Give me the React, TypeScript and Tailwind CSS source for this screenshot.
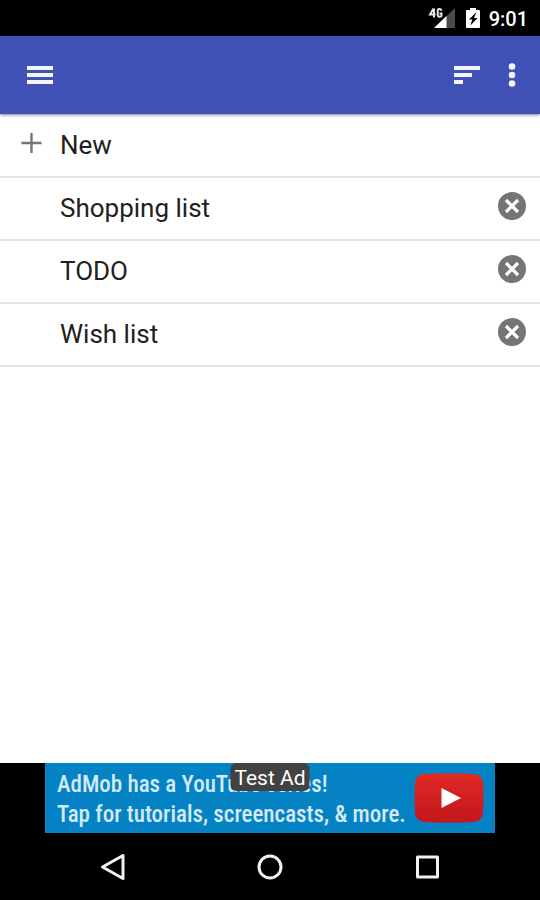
import React from 'react'

const lists = ["Shopping list", "TODO", "Wish list"]

const StatusBar = () => {
    return (
        <div className="flex h-9 items-center justify-end bg-black pr-3 text-white">
            <svg className="h-6 w-7" viewBox="0 0 28 24" aria-hidden="true">
                <path d="M28 2v20H7z" fill="#4a4a4a" />
                <path d="M19.500 10v12H7z" fill="#fff" />
                <path d="M6 2.500L2.500 8.500h5.500M7 2.500v9M14.500 4.500c-.8-2.200-4-2.200-4 .5v3.500c0 3 4 3 4 .5V7.500h-2" fill="none" stroke="#000" strokeWidth="4" />
                <path d="M6.500 2.500L3 8.500h5.500M7 2.500v9M14.500 4.800c-.6-2.400-3.800-2.300-3.800.3v3.400c0 3 3.800 2.800 3.800 1V7.500h-2" fill="none" stroke="#e8e8e8" strokeWidth="2" />
            </svg>
            <svg className="ml-2.5 h-6 w-4" viewBox="0 0 16 24" aria-hidden="true">
                <path d="M5 2h6v2h3q1 0 1 1v16q0 1-1 1H2q-1 0-1-1V5q0-1 1-1h3z" fill="#fff" />
                <path d="M11.500 6L4 13.500h3.200L5.500 19.500 12.500 12H9z" fill="#000" />
            </svg>
            <span className="ml-2 pt-0.5 text-[20px] font-medium leading-6">9:01</span>
        </div>
    )
}

const Toolbar = () => {
    return (
        <header className="relative flex h-[78px] items-center bg-[#3f51b5] pl-6 pr-4 shadow-[0px_1px_3px_0px_#00000080]">
            <button type="button" aria-label="Menu" className="flex h-8 w-8 items-center justify-center">
                <svg className="h-8 w-8" viewBox="0 0 32 32" fill="#f4f5fb">
                    <path d="M3 7h26v4H3zM3 14h26v4H3zM3 21h26v4H3z" />
                </svg>
            </button>
            <button type="button" aria-label="Sort" className="ml-auto flex h-8 w-8 items-center justify-center">
                <svg className="h-8 w-8" viewBox="0 0 32 32" fill="#f4f5fb">
                    <path d="M3 7h26v4H3zM3 14h18v4H3zM3 21h9v4H3z" />
                </svg>
            </button>
            <button type="button" aria-label="More options" className="ml-[17px] flex h-8 w-6 items-center justify-center">
                <svg className="h-8 w-6" viewBox="0 0 24 32" fill="#f4f5fb">
                    <circle cx="12" cy="7.500" r="3.300" />
                    <circle cx="12" cy="16" r="3.300" />
                    <circle cx="12" cy="24.500" r="3.300" />
                </svg>
            </button>
        </header>
    )
}

const TestAd = () => {
    return (
        <div className="relative bg-black px-[45px]">
            <a href="#ad" className="flex h-[70px] items-center bg-[#0582c4] pl-3 pr-[11px] text-[#d3eaf8]">
                <span className="whitespace-nowrap pt-1 font-['Roboto_Condensed','Roboto',sans-serif] text-[23px] font-medium leading-[30px]">
                    AdMob has a YouTube series!<br />
                    Tap for tutorials, screencasts, &amp; more.
                </span>
                <svg className="ml-auto h-[50px] w-[70px] shrink-0" viewBox="0 0 70 50" aria-hidden="true">
                    <defs>
                        <linearGradient id="play" x1="0" y1="0" x2="0" y2="1">
                            <stop offset="0" stopColor="#e02a24" />
                            <stop offset="1" stopColor="#c4161c" />
                        </linearGradient>
                    </defs>
                    <path d="M10 1Q35-.5 60 1q8 .5 9 9 1 15 0 30-1 8-9 9-25 1.500-50 0-8-1-9-9-1-15 0-30 1-8.500 9-9z" fill="url(#play)" />
                    <path d="M27.500 15v20L47 25z" fill="#fff" />
                </svg>
            </a>
            <span className="absolute left-1/2 top-0 -translate-x-1/2 whitespace-nowrap rounded-md bg-[#424242] px-1 pt-0.5 text-[21px] leading-[26px] text-white">Test Ad</span>
        </div>
    )
}

const NavBar = () => {
    return (
        <nav className="flex h-[67px] items-center justify-center gap-[125px] bg-black">
            <button type="button" aria-label="Back">
                <svg className="h-8 w-8" viewBox="0 0 32 32" fill="none" stroke="#f2f2f2" strokeWidth="3" strokeLinejoin="round">
                    <path d="M26 4.500v23L5.500 16z" />
                </svg>
            </button>
            <button type="button" aria-label="Home">
                <svg className="h-8 w-8" viewBox="0 0 32 32" fill="none" stroke="#f2f2f2" strokeWidth="3">
                    <circle cx="16" cy="16" r="11" />
                </svg>
            </button>
            <button type="button" aria-label="Recent apps">
                <svg className="h-8 w-8" viewBox="0 0 32 32" fill="none" stroke="#f2f2f2" strokeWidth="3" strokeLinejoin="round">
                    <path d="M6.500 6h20v20h-20z" />
                </svg>
            </button>
        </nav>
    )
}

const App = () => {
    return (
        <div className="flex min-h-screen flex-col bg-white font-['Roboto',sans-serif] text-[#212121]">
            <StatusBar />
            <Toolbar />
            <main className="flex-1">
                <button type="button" className="flex h-16 w-full items-center border-b-2 border-[#e4e4e4] pl-5 text-left text-[26px] leading-8">
                    <svg className="mb-1 mr-4 h-6 w-6" viewBox="0 0 24 24" fill="none" stroke="#757575" strokeWidth="2.400" aria-hidden="true">
                        <path d="M11.500 2v20M1.500 12h20" />
                    </svg>
                    New
                </button>
                <ul>
                    {lists.map((name) => (
                        <li key={name} className="flex h-[63px] items-center border-b-2 border-[#e4e4e4] pb-0.5 pl-[60px] pr-3">
                            <a href="#list" className="flex-1 text-[26px] leading-8">{name}</a>
                            <button type="button" aria-label={`Delete ${name}`} className="mb-1 h-8 w-8">
                                <svg className="h-8 w-8" viewBox="0 0 32 32">
                                    <circle cx="16" cy="16" r="14" fill="#757575" />
                                    <path d="M10 10l12 12M22 10l-12 12" stroke="#fff" strokeWidth="3.200" />
                                </svg>
                            </button>
                        </li>
                    ))}
                </ul>
            </main>
            <TestAd />
            <NavBar />
        </div>
    )
}

export default App
